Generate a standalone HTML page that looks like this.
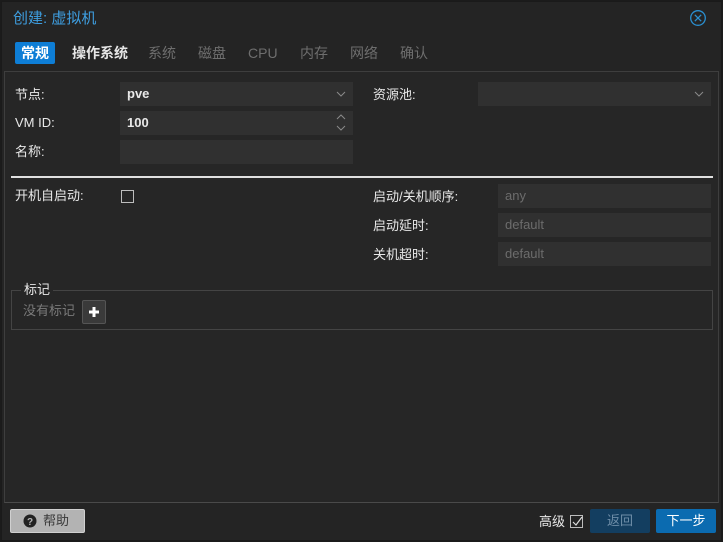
<!DOCTYPE html>
<html><head><meta charset="utf-8"><style>
*{margin:0;padding:0;box-sizing:border-box}
body{width:723px;height:542px;background:#1b1b1b;font-family:"Liberation Sans","Noto Sans CJK SC",sans-serif;font-size:13px;color:#e8e8e8;position:relative;overflow:hidden}
.dlg{position:absolute;left:1px;top:1px;width:721px;height:540px;background:#242424;border:1px solid #1a1a1a}
.a{position:absolute;white-space:nowrap}
.panel{position:absolute;left:4px;top:71px;width:715px;height:432px;border:1px solid #3e3e3e;border-bottom-color:#4a4a4a;background:#262626}
.in{position:absolute;background:#303030;height:24px;line-height:24px;padding-left:7px}
.lbl{position:absolute;line-height:24px}
.gray{color:#6c6c6c}
.tab{position:absolute;top:42px;height:22px;line-height:22px;font-size:14px;color:#6e6e6e}
</style></head><body>
<div class="dlg"></div>
<div class="a" style="left:13px;top:9px;font-size:15px;color:#3e9ee0;line-height:20px">创建: 虚拟机</div>
<svg class="a" style="left:689px;top:9px" width="18" height="18"><circle cx="9" cy="9" r="7.3" fill="none" stroke="#2a8fd0" stroke-width="1.3"/><path d="M5.8 5.8L12.2 12.2M12.2 5.8L5.8 12.2" stroke="#2a8fd0" stroke-width="1.3"/></svg>
<div class="tab" style="left:15px;width:40px;background:#0e7ed6;color:#fff;text-align:center;border-radius:2px;font-weight:bold">常规</div>
<div class="tab" style="left:72px;color:#e6e6e6;font-weight:bold">操作系统</div>
<div class="tab" style="left:148px">系统</div>
<div class="tab" style="left:198px">磁盘</div>
<div class="tab" style="left:248px">CPU</div>
<div class="tab" style="left:300px">内存</div>
<div class="tab" style="left:350px">网络</div>
<div class="tab" style="left:400px">确认</div>
<div class="panel"></div>
<div class="lbl" style="left:15px;top:83px">节点:</div>
<div class="in" style="left:120px;top:82px;width:233px;font-weight:bold">pve</div>
<svg class="a" style="left:336px;top:90px" width="10" height="8"><path d="M1 2L5 6L9 2" fill="none" stroke="#8a8a8a"/></svg>
<div class="lbl" style="left:15px;top:111px">VM ID:</div>
<div class="in" style="left:120px;top:111px;width:233px;font-weight:bold">100</div>
<svg class="a" style="left:336px;top:113px" width="10" height="20"><path d="M1 6L5 2L9 6M1 13L5 17L9 13" fill="none" stroke="#8a8a8a"/></svg>
<div class="lbl" style="left:15px;top:140px">名称:</div>
<div class="in" style="left:120px;top:140px;width:233px"></div>
<div class="lbl" style="left:373px;top:83px">资源池:</div>
<div class="in" style="left:478px;top:82px;width:233px"></div>
<svg class="a" style="left:694px;top:90px" width="10" height="8"><path d="M1 2L5 6L9 2" fill="none" stroke="#8a8a8a"/></svg>
<div class="a" style="left:11px;top:176px;width:702px;height:2px;background:#e0e0e0"></div>
<div class="lbl" style="left:15px;top:184px">开机自启动:</div>
<div class="a" style="left:121px;top:190px;width:13px;height:13px;border:1px solid #bdbdbd"></div>
<div class="lbl" style="left:373px;top:185px">启动/关机顺序:</div>
<div class="in gray" style="left:498px;top:184px;width:213px">any</div>
<div class="lbl" style="left:373px;top:214px">启动延时:</div>
<div class="in gray" style="left:498px;top:213px;width:213px">default</div>
<div class="lbl" style="left:373px;top:243px">关机超时:</div>
<div class="in gray" style="left:498px;top:242px;width:213px">default</div>
<div class="a" style="left:11px;top:290px;width:702px;height:40px;border:1px solid #444"></div>
<div class="a" style="left:21px;top:282px;padding:0 3px;background:#262626;line-height:16px">标记</div>
<div class="lbl gray" style="left:23px;top:299px;color:#7a7a7a">没有标记</div>
<div class="a" style="left:82px;top:300px;width:24px;height:24px;background:#3a3a3a;border:1px solid #555;border-radius:2px"></div>
<svg class="a" style="left:88px;top:306px" width="12" height="12"><path d="M6 1V11M1 6H11" stroke="#fff" stroke-width="3"/></svg>
<div class="a" style="left:10px;top:509px;width:75px;height:24px;background:#b3b3b3;border:1px solid #d0d0d0;border-radius:2px;color:#3a3a3a;line-height:22px;padding-left:32px">帮助</div>
<svg class="a" style="left:23px;top:514px" width="14" height="14"><circle cx="7" cy="7" r="6.5" fill="#222"/><text x="7" y="11" font-size="10" font-weight="bold" fill="#b3b3b3" text-anchor="middle" font-family="Liberation Sans">?</text></svg>
<div class="a" style="left:539px;top:512px;line-height:20px">高级</div>
<div class="a" style="left:570px;top:515px;width:13px;height:13px;border:1px solid #bdbdbd"></div>
<svg class="a" style="left:571px;top:516px" width="12" height="12"><path d="M2 6L5 9L11 1" fill="none" stroke="#ddd" stroke-width="1.2"/></svg>
<div class="a" style="left:590px;top:509px;width:60px;height:24px;background:#133e60;border-radius:2px;color:#6f8ea8;text-align:center;line-height:24px">返回</div>
<div class="a" style="left:656px;top:509px;width:60px;height:24px;background:#0b6bb0;border-radius:2px;color:#fff;text-align:center;line-height:24px">下一步</div>
</body></html>
